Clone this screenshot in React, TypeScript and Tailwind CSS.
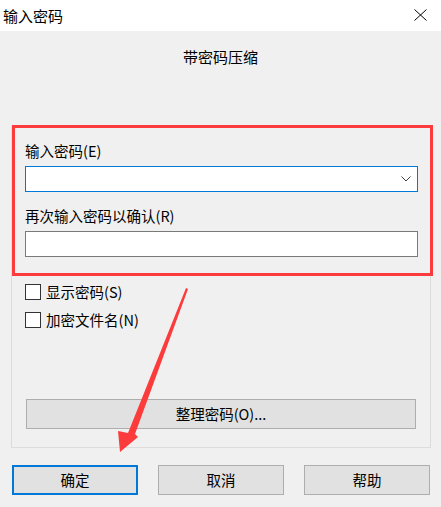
const font = { fontFamily: '"Noto Sans CJK SC", "Noto Sans", sans-serif' };

function Checkbox({ label }: { label: string }) {
  return (
    <label className="flex h-4 items-center gap-[5px]">
      <span className="h-4 w-4 border border-[#333333] bg-white" />
      <span className="text-[14.5px] leading-5 text-black">{label}</span>
    </label>
  );
}

function Button({ label, primary }: { label: string; primary?: boolean }) {
  return (
    <button
      className={`h-[30px] w-[126px] bg-[#e1e1e1] text-[14.5px] text-black ${
        primary ? "border-2 border-[#0078d7]" : "border border-[#adadad]"
      }`}
    >
      {label}
    </button>
  );
}

export default function App() {
  return (
    <div className="relative h-[507px] w-[441px] overflow-hidden bg-[#f0f0f0]" style={font}>
      {/* title bar */}
      <div className="flex h-[31px] items-center justify-between bg-white pl-[3px] pr-[14px]">
        <span className="text-[15px] leading-5 text-black">输入密码</span>
        <svg width="13" height="12" viewBox="0 0 13 12" className="mt-[-1px]">
          <path d="M0.5 0.5 L12.5 11.5 M12.5 0.5 L0.5 11.5" stroke="#000" strokeWidth="1" />
        </svg>
      </div>

      <div className="px-[11px]">
        <div className="mt-4 text-center text-[15px] leading-5 text-black">带密码压缩</div>

        {/* group box */}
        <div className="mt-[59px] w-[420px] border border-[#dcdcdc] pb-[18px] pl-[13px] pr-[12px] pt-[14px]">
          <div className="text-[14.5px] leading-5 text-black">输入密码(E)</div>
          <div className="mt-[5px] flex h-[26px] items-center justify-end border border-[#0078d7] bg-white pr-[6px]">
            <svg width="10" height="6" viewBox="0 0 10 6">
              <path d="M0.5 0.5 L5 5 L9.5 0.5" fill="none" stroke="#444" strokeWidth="1" />
            </svg>
          </div>
          <div className="mt-[14px] text-[14.5px] leading-5 text-black">再次输入密码以确认(R)</div>
          <div className="mt-[5px] h-[26px] border border-[#7a7a7a] bg-white" />

          <div className="mt-[27px] flex flex-col gap-3">
            <Checkbox label="显示密码(S)" />
            <Checkbox label="加密文件名(N)" />
          </div>

          <button className="ml-px mt-[71px] h-[30px] w-[390px] border border-[#adadad] bg-[#e1e1e1] text-[14.5px] text-black">
            整理密码(O)...
          </button>
        </div>

        {/* dialog buttons */}
        <div className="mt-[17px] flex gap-5 pl-px">
          <Button label="确定" primary />
          <Button label="取消" />
          <Button label="帮助" />
        </div>
      </div>

      {/* annotation overlay */}
      <div className="pointer-events-none absolute left-[12px] top-[125px] h-[151px] w-[421px] border-[3px] border-[#fc3c3c]" />
      <svg className="pointer-events-none absolute left-0 top-0" width="441" height="507">
        <polygon
          points="186,288 188,289 135,434 138,437 120,452 118,431 128,433"
          fill="#fc3c3c"
        />
      </svg>
    </div>
  );
}
